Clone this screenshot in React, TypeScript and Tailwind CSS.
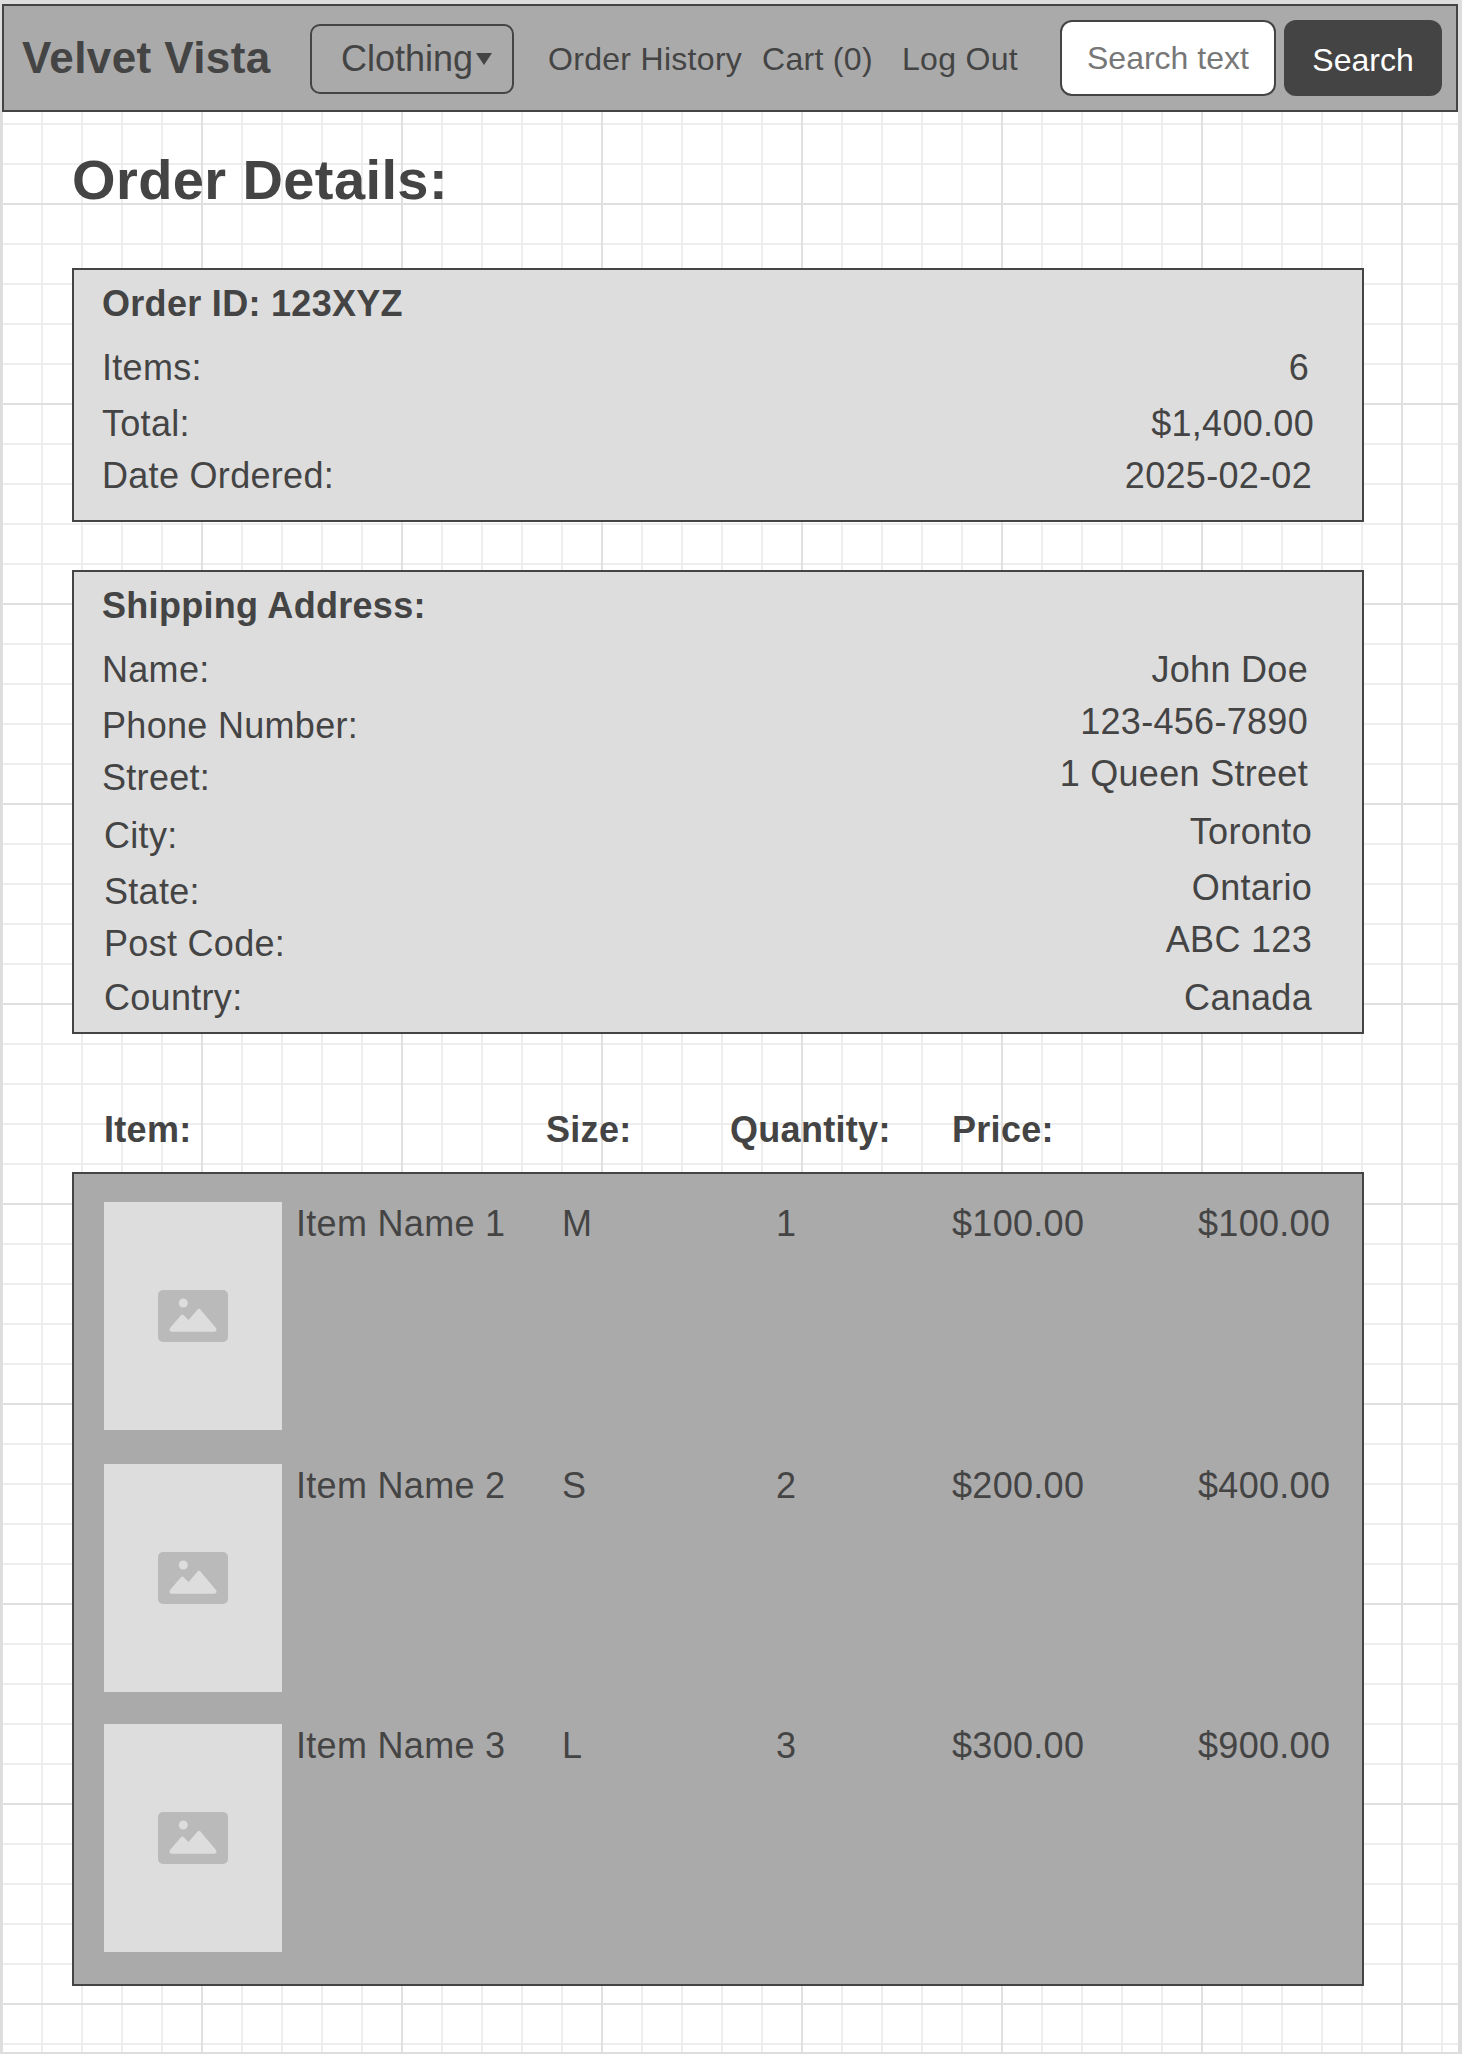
type Row = { label: string; value: string; l: string; v: string };

const orderRows: Row[] = [
  { label: "Items:", value: "6", l: "mt-6", v: "mt-6 mr-[3px]" },
  { label: "Total:", value: "$1,400.00", l: "mt-4", v: "mt-4 mr-[-2px]" },
  { label: "Date Ordered:", value: "2025-02-02", l: "mt-3", v: "mt-3" },
];

const shippingRows: Row[] = [
  { label: "Name:", value: "John Doe", l: "mt-6", v: "mt-6 mr-1" },
  { label: "Phone Number:", value: "123-456-7890", l: "mt-4", v: "mt-3 mr-1" },
  { label: "Street:", value: "1 Queen Street", l: "mt-3", v: "mt-3 mr-1" },
  { label: "City:", value: "Toronto", l: "mt-[18px] ml-[2px]", v: "mt-[18px]" },
  { label: "State:", value: "Ontario", l: "mt-4 ml-[2px]", v: "mt-4" },
  { label: "Post Code:", value: "ABC 123", l: "mt-3 ml-[2px]", v: "mt-3" },
  { label: "Country:", value: "Canada", l: "mt-[14px] ml-[2px]", v: "mt-[18px]" },
];

const items = [
  { name: "Item Name 1", size: "M", qty: "1", price: "$100.00", total: "$100.00", gap: "" },
  { name: "Item Name 2", size: "S", qty: "2", price: "$200.00", total: "$400.00", gap: "mt-[34px]" },
  { name: "Item Name 3", size: "L", qty: "3", price: "$300.00", total: "$900.00", gap: "mt-[32px]" },
];

// Graph-paper lines: a strong line every 200px, a light one every 40px.
const paperGrid =
  "bg-[linear-gradient(90deg,#e0e0e0_2px,transparent_2px),linear-gradient(#e0e0e0_2px,transparent_2px),linear-gradient(90deg,#eee_2px,transparent_2px),linear-gradient(#eee_2px,transparent_2px)] [background-size:200px_200px,200px_200px,40px_40px,40px_40px] [background-position:-1px_0,0_-1px,-1px_0,0_-1px]";

function DetailCard({ title, rows, className }: { title: string; rows: Row[]; className: string }) {
  return (
    <section className={`flex justify-between border-2 border-[#444] bg-[#ddd] pr-[50px] pl-[28px] ${className}`}>
      <div className="flex flex-col pt-[14px]">
        <h2 className="font-bold">{title}</h2>
        {rows.map((r) => (
          <div key={r.label} className={r.l}>{r.label}</div>
        ))}
      </div>
      <div className="flex flex-col items-end pt-[54px]">
        {rows.map((r) => (
          <div key={r.label} className={r.v}>{r.value}</div>
        ))}
      </div>
    </section>
  );
}

function Placeholder() {
  return (
    <div className="flex h-[228px] items-center justify-center bg-[#ddd]">
      <svg width="70" height="52" viewBox="0 0 70 52">
        <rect width="70" height="52" rx="5" fill="#bababa" />
        <circle cx="25.3" cy="13" r="4.5" fill="#ddd" />
        <path
          d="M13.5 41.8H56.5Q59.6 41 58 38L42.2 19.3Q41 18 39.8 19.3L30.5 30L25.2 24.8Q24.2 24 23.2 25L12 38Q10.500 41 13.500 41.800Z"
          fill="#ddd"
        />
      </svg>
    </div>
  );
}

export default function App() {
  return (
    <div
      className={`h-[2054px] w-[1462px] overflow-hidden border-t-4 border-r-4 border-b-2 border-l-2 border-[#ddd] bg-white font-['Liberation_Sans',sans-serif] text-[36px] leading-[40px] tracking-[0.3px] whitespace-nowrap text-[#444] ${paperGrid}`}
    >
      <header className="flex h-[108px] border-2 border-[#444] bg-[#aaa] pl-[18px]">
        <div className="mt-[28px] w-[288px] text-[44px] leading-[48px] font-bold tracking-[0.4px]">Velvet Vista</div>
        <button className="mt-[18px] flex h-[70px] w-[204px] items-center rounded-[10px] border-2 border-[#444] pl-[29px] tracking-normal">
          <span>Clothing</span>
          <svg width="16" height="12" viewBox="0 0 16 12" className="ml-[3px]">
            <path d="M0 0H16L8 12Z" fill="#444" />
          </svg>
        </button>
        <nav className="mt-[33px] ml-[34px] flex text-[32px]">
          <a className="w-[214px]">Order History</a>
          <a className="w-[140px]">Cart (0)</a>
          <a className="w-[158px]">Log Out</a>
        </nav>
        <div className="mt-[14px] flex h-[76px] w-[216px] rounded-xl border-2 border-[#444] bg-white pt-4 pl-[25px] text-[32px] tracking-normal text-[#777]">
          Search text
        </div>
        <button className="mt-[14px] ml-2 flex h-[76px] w-[158px] justify-center rounded-xl bg-[#444] pt-5 text-[32px] tracking-normal text-white">
          Search
        </button>
      </header>
      <main className="ml-[70px] w-[1292px]">
        <h1 className="pt-9 text-[56px] leading-[64px] font-bold tracking-[0.4px]">Order Details:</h1>
        <DetailCard title="Order ID: 123XYZ" rows={orderRows} className="mt-14 h-[254px]" />
        <DetailCard title="Shipping Address:" rows={shippingRows} className="mt-12 h-[464px]" />
        <div className="mt-[76px] grid grid-cols-[442px_184px_222px_1fr] pl-8 font-bold">
          <span>Item:</span>
          <span>Size:</span>
          <span>Quantity:</span>
          <span>Price:</span>
        </div>
        <section className="mt-[22px] h-[814px] border-2 border-[#444] bg-[#aaa] pt-7 pl-[30px]">
          {items.map((it) => (
            <div key={it.name} className={`grid grid-cols-[178px_280px_214px_176px_246px_1fr] ${it.gap}`}>
              <Placeholder />
              <span className="pt-[2px] pl-[14px]">{it.name}</span>
              <span className="pt-[2px]">{it.size}</span>
              <span className="pt-[2px]">{it.qty}</span>
              <span className="pt-[2px]">{it.price}</span>
              <span className="pt-[2px]">{it.total}</span>
            </div>
          ))}
        </section>
      </main>
    </div>
  );
}
